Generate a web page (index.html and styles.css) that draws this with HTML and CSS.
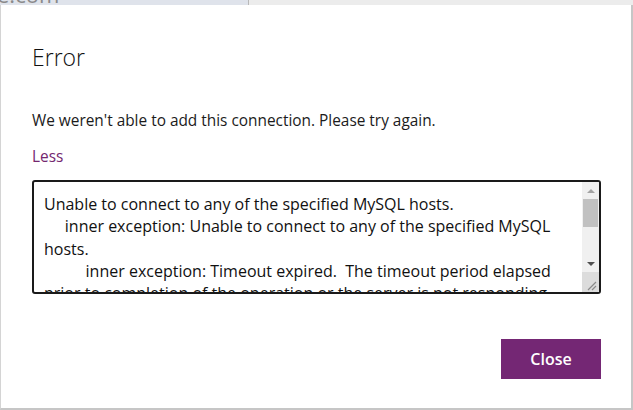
FILE: index.html
```html
<!DOCTYPE html>
<html>
<head>
<meta charset="utf-8">
<link rel="stylesheet" href="styles.css">
</head>
<body>
<div class="backdrop">
  <div class="bd-left"><span class="bd-text">e.com</span></div>
  <div class="bd-right"></div>
</div>
<div class="dialog">
  <h1 class="title">Error</h1>
  <p class="message">We weren't able to add this connection. Please try again.</p>
  <a class="less">Less</a>
  <div class="details">
    <div class="details-text">Unable to connect to any of the specified MySQL hosts.
     inner exception: Unable to connect to any of the specified MySQL hosts.
          inner exception: Timeout expired.  The timeout period elapsed prior to completion of the operation or the server is not responding.</div>
    <div class="scrollbar">
      <div class="sb-arrow sb-up"></div>
      <div class="sb-track"><div class="sb-thumb"></div></div>
      <div class="sb-arrow sb-down"></div>
      <div class="sb-grip">
        <svg width="17" height="20" viewBox="0 0 17 20"><path d="M6 18 L14 10 M10 18 L14 14" stroke="#8a8a8a" stroke-width="1.2" fill="none"/></svg>
      </div>
    </div>
  </div>
  <div class="actions">
    <button class="close">Close</button>
  </div>
</div>
</body>
</html>
```
FILE: styles.css
```css
html, body {
  margin: 0;
  padding: 0;
  background: #ececec;
  width: 633px;
  height: 410px;
  overflow: hidden;
  font-family: "Open Sans", "Noto Sans", sans-serif;
}
.backdrop {
  display: flex;
  height: 5px;
  overflow: hidden;
}
.bd-left {
  width: 248px;
  background: #dfe3eb;
  border-right: 1px solid #b8b8b8;
  overflow: hidden;
}
.bd-text {
  display: block;
  margin-top: -17px;
  margin-left: -3px;
  font-size: 22px;
  line-height: 22px;
  color: #8a8a8a;
}
.bd-right {
  flex: 1;
  background: #ececec;
}
.dialog {
  background: #fff;
  height: 405px;
  width: 633px;
  box-sizing: border-box;
  border-left: 1px solid #d4d4d4;
  border-right: 2px solid #c6c6c6;
  border-bottom: 2px solid #c6c6c6;
  padding: 0 30px 0 31px;
  display: flex;
  flex-direction: column;
}
.title {
  margin: 37px 0 0 0;
  font-weight: 300;
  font-size: 23px;
  line-height: 30px;
  color: #111;
}
.message {
  margin: 38px 0 0 0;
  font-size: 15.4px;
  line-height: 21px;
  color: #1b1b1b;
}
.less {
  margin-top: 15px;
  font-size: 15.4px;
  line-height: 21px;
  color: #74276f;
}
.details {
  margin-top: 13px;
  height: 114px;
  box-sizing: border-box;
  border: 2px solid #1a1a1a;
  border-radius: 3px;
  display: flex;
  overflow: hidden;
}
.details-text {
  flex: 1;
  padding: 11px 10px 0 10px;
  font-size: 16px;
  line-height: 22.3px;
  color: #111;
  white-space: pre-wrap;
  overflow: hidden;
}
.scrollbar {
  width: 17px;
  background: #f0f0f0;
  display: flex;
  flex-direction: column;
}
.sb-arrow {
  height: 17px;
  display: flex;
  align-items: center;
  justify-content: center;
}
.sb-up::before {
  content: "";
  border-left: 4px solid transparent;
  border-right: 4px solid transparent;
  border-bottom: 4px solid #a3a3a3;
}
.sb-down::before {
  content: "";
  border-left: 4px solid transparent;
  border-right: 4px solid transparent;
  border-top: 4px solid #505050;
}
.sb-track {
  flex: 1;
  padding: 0 1px;
}
.sb-thumb {
  height: 28px;
  background: #c1c1c1;
}
.sb-grip {
  height: 20px;
  background: #dcdcdc;
}
.sb-grip svg { display: block; }
.actions {
  margin-top: 45px;
  display: flex;
  justify-content: flex-end;
}
.close {
  width: 100px;
  height: 40px;
  border: none;
  background: #742774;
  color: #fff;
  font-family: "Open Sans", "Noto Sans", sans-serif;
  font-weight: 600;
  font-size: 16px;
  padding: 0;
}
```
